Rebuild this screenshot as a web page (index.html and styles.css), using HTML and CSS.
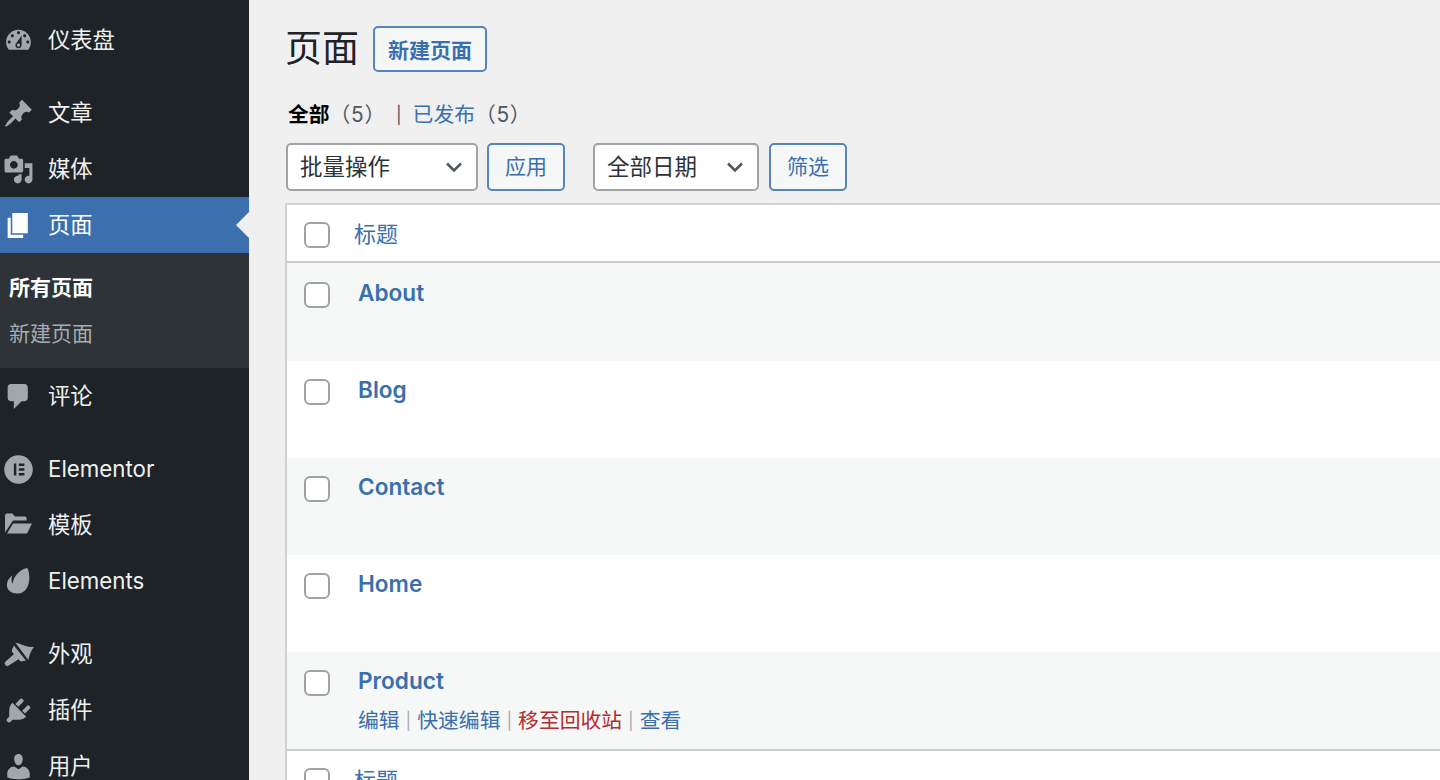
FILE: index.html
```html
<!DOCTYPE html>
<html lang="zh-CN">
<head>
<meta charset="utf-8">
<title>页面</title>
<link rel="stylesheet" href="styles.css">
</head>
<body>
<div class="app">
  <nav class="sidebar">
    <a class="menu-item gap-after"><svg class="icon" viewBox="0 0 20 20"><path fill-rule="evenodd" d="M3.76 16h12.48c1.1-1.37 1.76-3.11 1.76-5 0-4.42-3.58-8-8-8s-8 3.58-8 8c0 1.89.66 3.63 1.76 5zM10 4c.55 0 1 .45 1 1s-.45 1-1 1-1-.45-1-1 .45-1 1-1zM6 6c.55 0 1 .45 1 1s-.45 1-1 1-1-.45-1-1 .45-1 1-1zm8 0c.55 0 1 .45 1 1s-.45 1-1 1-1-.45-1-1 .45-1 1-1zm-5.37 5.55L12 7v6c0 1.1-.9 2-2 2s-2-.9-2-2c0-.57.24-1.08.63-1.45zM4 10c.55 0 1 .45 1 1s-.45 1-1 1-1-.45-1-1 .45-1 1-1zm12 0c.55 0 1 .45 1 1s-.45 1-1 1-1-.45-1-1 .45-1 1-1zm-5 3c0-.55-.45-1-1-1s-1 .45-1 1 .45 1 1 1 1-.45 1-1z"/></svg><span class="cjk">仪表盘</span></a>
    <a class="menu-item"><svg class="icon" viewBox="0 0 20 20"><path d="M10.44 3.02l1.82-1.82 6.36 6.35-1.83 1.82c-1.05-.68-2.48-.57-3.41.36l-.75.75c-.92.93-1.04 2.35-.35 3.41l-1.83 1.82-2.41-2.41-2.8 2.79c-.42.42-3.38 2.71-3.8 2.29s1.86-3.39 2.28-3.81l2.79-2.79L4.1 9.36l1.83-1.82c1.05.69 2.48.57 3.4-.36l.75-.75c.93-.92 1.05-2.35.36-3.41z"/></svg><span class="cjk">文章</span></a>
    <a class="menu-item"><svg class="icon" viewBox="0 0 20 20"><path fill-rule="evenodd" d="M13 11V4c0-.55-.45-1-1-1h-1.67L9 1H5L3.67 3H2c-.55 0-1 .45-1 1v7c0 .55.45 1 1 1h10c.55 0 1-.45 1-1zM7 4.5c1.38 0 2.5 1.12 2.5 2.5S8.38 9.5 7 9.5 4.5 8.38 4.5 7 5.62 4.500 7 4.500zM14 6h5v10.500c0 1.380-1.120 2.500-2.500 2.500S14 17.880 14 16.500s1.120-2.500 2.500-2.500c.17 0 .34.02.5.05V9h-3V6zm-4 8.050V13h2v3.500c0 1.380-1.120 2.500-2.500 2.500S7 17.880 7 16.500 8.120 14 9.500 14c.17 0 .34.02.5.05z"/></svg><span class="cjk">媒体</span></a>
    <a class="menu-item current"><svg class="icon" viewBox="0 0 20 20"><path d="M6 15V2h10v13H6zm-1 1h8v2H3V5h2v11z"/></svg><span class="cjk">页面</span></a>
    <div class="submenu">
      <a class="sub-item sub-current">所有页面</a>
      <a class="sub-item">新建页面</a>
    </div>
    <a class="menu-item gap-after"><svg class="icon" viewBox="0 0 20 20"><path d="M5 2h9c1.1 0 2 .9 2 2v7c0 1.100-.9 2-2 2h-2l-5 5v-5H5c-1.100 0-2-.9-2-2V4c0-1.100.9-2 2-2z"/></svg><span class="cjk">评论</span></a>
    <a class="menu-item"><svg class="icon" viewBox="0 0 20 20"><path fill-rule="evenodd" d="M10 .8a9.200 9.200 0 1 0 0 18.400A9.200 9.200 0 0 0 10 .8zM7 6.200h1.600v7.600H7V6.200zm3.200 0h3.600v1.500h-3.600V6.200zm0 3h3.600v1.600h-3.600V9.200zm0 3.100h3.600v1.500h-3.600v-1.500z"/></svg><span class="latin">Elementor</span></a>
    <a class="menu-item"><svg class="icon" viewBox="0 0 20 20"><path d="M1.300 3.500q0-1.200 1.200-1.200h3.500l1.700 1.900h6.500q1 0 1 1v1.500H6.500L1.300 14.500zM6.500 8.700h12.200L15.500 15.200H2.600z"/></svg><span class="cjk">模板</span></a>
    <a class="menu-item gap-after"><svg class="icon" viewBox="0 0 20 20"><path d="M15.300 1.300c.9 0 1.700 3.200 1.700 6.200 0 5.500-2.700 10-7.500 10.300-4.200.2-7-2.300-7-5.500 0-2.500 1.300-4.500 3.500-6.300-.7 2-.7 4 .2 5.500C6.800 7 10 2.800 15.300 1.300z"/></svg><span class="latin">Elements</span></a>
    <a class="menu-item"><svg class="icon" viewBox="0 0 20 20"><path d="M8 2.400c3 .4 6 2.100 8.500 2.600 1.500.3 2.500.3 3.500 0-2 2.500-2.800 5-3.700 8.500zM7 4.200l7.800 9.600-2.300.6c-.7.2-1.300 0-2-.9l-.5-.5L4 17q-1.300 1-2.400 0-1-1.200-.1-2.300L7 9.800l-.5-.6c-1-1.100-1-2.300-.3-3.200z"/></svg><span class="cjk">外观</span></a>
    <a class="menu-item"><svg class="icon" viewBox="0 0 20 20"><path d="M13.110 4.360L9.870 7.600 8 5.730l3.240-3.240c.35-.34 1.050-.2 1.560.32.52.51.66 1.210.31 1.550zm-8 1.770l.91-1.120 9.010 9.010-1.190.84c-.71.71-2.630 1.160-3.820 1.160H6.140L4.900 17.260c-.59.59-1.540.59-2.120 0-.59-.58-.59-1.530 0-2.120l1.240-1.240v-3.880c0-1.130.4-3.180 1.090-3.890zm7.260 3.970l3.240-3.240c.34-.35 1.040-.21 1.550.31.52.51.66 1.210.31 1.560l-3.240 3.240z"/></svg><span class="cjk">插件</span></a>
    <a class="menu-item"><svg class="icon" viewBox="0 0 20 20"><path d="M10 9.250c-2.270 0-2.730-3.440-2.730-3.440C7 4.020 7.820 2 9.970 2c2.160 0 2.980 2.020 2.710 3.810 0 0-.41 3.440-2.680 3.440zm0 2.570L12.720 10c2.390 0 4.520 2.330 4.520 4.530v2.490s-3.650 1.130-7.240 1.130c-3.650 0-7.240-1.130-7.240-1.130v-2.490c0-2.250 1.940-4.530 4.430-4.530z"/></svg><span class="cjk">用户</span></a>
  </nav>
  <main class="content">
    <header class="page-head">
      <h1 class="page-title">页面</h1>
      <a class="btn btn-new">新建页面</a>
    </header>
    <div class="views">
      <b class="view-current">全部</b><span class="count">（5）</span><span class="view-sep">|</span><a class="link">已发布</a><span class="count">（5）</span>
    </div>
    <div class="toolbar">
      <div class="select select-bulk"><span class="select-text">批量操作</span><svg class="chev" viewBox="0 0 20 20"><path d="M3 6.500L10 13.500l7-7"/></svg></div>
      <a class="btn btn-tool btn-apply"><span class="select-text">应用</span></a>
      <div class="select select-date"><span class="select-text">全部日期</span><svg class="chev" viewBox="0 0 20 20"><path d="M3 6.500L10 13.500l7-7"/></svg></div>
      <a class="btn btn-tool"><span class="select-text">筛选</span></a>
    </div>
    <div class="table">
      <div class="head-row"><span class="check"></span><a class="link col-title">标题</a></div>
      <div class="row alt first"><span class="check"></span><div class="cell"><a class="row-title">About</a></div></div>
      <div class="row"><span class="check"></span><div class="cell"><a class="row-title">Blog</a></div></div>
      <div class="row alt"><span class="check"></span><div class="cell"><a class="row-title">Contact</a></div></div>
      <div class="row"><span class="check"></span><div class="cell"><a class="row-title">Home</a></div></div>
      <div class="row alt"><span class="check"></span><div class="cell"><a class="row-title">Product</a>
        <div class="actions"><a class="link">编辑</a><i class="sep">|</i><a class="link">快速编辑</a><i class="sep">|</i><a class="trash">移至回收站</a><i class="sep">|</i><a class="link">查看</a></div></div></div>
      <div class="head-row foot-row"><span class="check"></span><a class="link col-title">标题</a></div>
    </div>
  </main>
</div>
</body>
</html>
```
FILE: styles.css
```css
* { box-sizing: border-box; }
html, body { margin: 0; height: 780px; overflow: hidden; }
body {
  background: #f0f0f1;
  color: #3c434a;
  font-family: Inter, "Noto Sans CJK SC", "Noto Sans", sans-serif;
  font-size: 20.8px;
}
.app { display: flex; height: 780px; overflow: hidden; }
.sidebar {
  width: 249px;
  flex: none;
  background: #1d2327;
  padding-top: 12px;
  color: #f0f0f1;
}
.menu-item {
  display: flex;
  align-items: center;
  height: 56px;
  padding-left: 3px;
  font-size: 22.3px;
  color: #f0f0f1;
  position: relative;
}
.menu-item span { margin-left: 14px; }
.menu-item .cjk { padding-bottom: 4px; }
.menu-item .latin { padding-bottom: 1px; }
.gap-after { margin-bottom: 17px; }
.icon { width: 31px; height: 31px; fill: #a2a7ac; flex: none; }
.current { background: #3b6fae; color: #fff; }
.current .icon { fill: #fff; }
.current::after {
  content: "";
  position: absolute;
  right: 0;
  top: 50%;
  margin-top: -13px;
  border: 13px solid transparent;
  border-right-color: #f0f0f1;
  border-left-width: 0;
}
.submenu {
  background: #2e3338;
  height: 115px;
  padding-top: 12px;
  display: flex;
  flex-direction: column;
}
.sub-item {
  height: 46px;
  line-height: 46px;
  padding-left: 9px;
  font-size: 21px;
  color: #a7abb0;
}
.sub-current { color: #fff; font-weight: 600; }
.content { flex: 1; min-width: 0; padding-left: 36px; overflow: hidden; }
.page-head { display: flex; align-items: center; height: 46px; margin-top: 26px; }
.page-title { margin: 0 15px 0 0; width: 73px; font-size: 37px; font-weight: 400; color: #1d2327; line-height: 46px; white-space: nowrap; }
.btn {
  display: flex;
  align-items: center;
  justify-content: center;
  border: 2px solid #5585bb;
  border-radius: 5px;
  background: #f6f7f7;
  color: #3a6fae;
}
.btn-new { width: 114px; height: 46px; font-weight: 600; font-size: 21px; }
.views { height: 30px; line-height: 30px; margin-top: 28px; padding-left: 3px; display: flex; }
.view-current { font-weight: 700; color: #000; }
.count { color: #50575e; letter-spacing: .7px; }
.view-sep { margin: 0 11px 0 10px; color: #50575e; font-size: 17px; }
.link { color: #3a6fae; }
.toolbar { display: flex; margin-top: 13px; height: 48px; }
.select {
  display: flex;
  align-items: center;
  justify-content: space-between;
  height: 48px;
  padding: 0 12px 0 12px;
  background: #fff;
  border: 2px solid #a0a2a6;
  border-radius: 5px;
  font-size: 22.5px;
  color: #2c3338;
}
.select-bulk { width: 192px; margin: 0 9px 0 1px; }
.select-date { width: 166px; margin-right: 10px; }
.select-text { padding-bottom: 4px; }
.chev { width: 20px; height: 20px; fill: none; stroke: #50575e; stroke-width: 2.5; }
.btn-tool { width: 78px; height: 48px; font-size: 21px; }
.btn-apply { margin-right: 28px; }
.table {
  width: 1300px;
  margin-top: 12px;
  border: 2px solid #cfd0d2;
  border-right: 0;
  border-bottom: 0;
  background: #fff;
}
.head-row {
  display: flex;
  height: 58px;
  padding: 17px 0 0 17px;
  border-bottom: 2px solid #cacbcd;
}
.foot-row { height: 60px; border-top: 2px solid #cacbcd; border-bottom: 0; }
.check {
  width: 26px;
  height: 26px;
  flex: none;
  background: #fff;
  border: 2px solid #a0a2a6;
  border-radius: 6px;
}
.col-title { margin-left: 24px; line-height: 22px; font-size: 22px; margin-top: 1px; }
.row {
  display: flex;
  height: 97px;
  padding: 18px 0 0 17px;
  background: #fff;
}
.row.first { height: 98px; padding-top: 19px; }
.row.alt { background: #f6f7f7; }
.cell { margin-left: 28px; display: flex; flex-direction: column; }
.row-title { color: #3a6fae; font-weight: 600; font-size: 22.6px; line-height: 22px; }
.actions { margin-top: 14px; line-height: 30px; display: flex; align-items: center; }
.sep { font-style: normal; color: #a7aaad; margin: 0 6px; font-size: 17px; }
.trash { color: #b32d2e; }
```
